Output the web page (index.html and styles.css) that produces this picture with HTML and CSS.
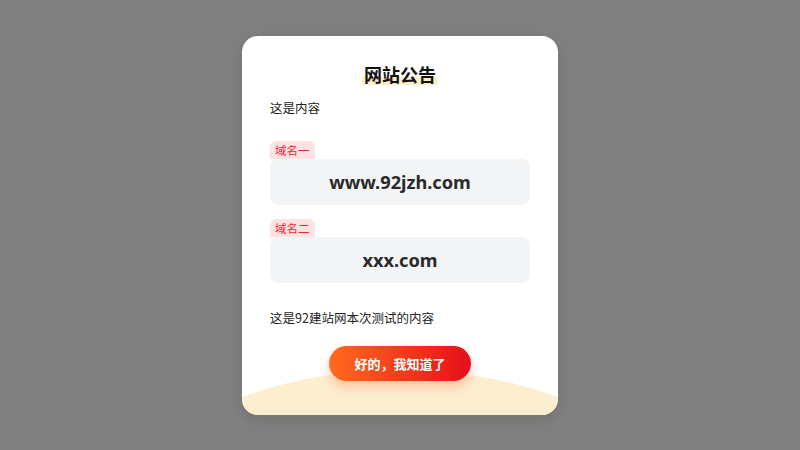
FILE: index.html
```html
<!DOCTYPE html>
<html lang="zh">
<head>
<meta charset="utf-8">
<link rel="stylesheet" href="styles.css">
</head>
<body>
<div class="overlay">
  <div class="card">
    <div class="arc"></div>
    <div class="content">
      <h1 class="title"><span>网站公告</span></h1>
      <p class="intro">这是内容</p>
      <div class="domain">
        <span class="tag">域名一</span>
        <div class="box">www.92jzh.com</div>
      </div>
      <div class="domain second">
        <span class="tag">域名二</span>
        <div class="box">xxx.com</div>
      </div>
      <p class="note">这是92建站网本次测试的内容</p>
      <div class="actions"><button class="btn">好的，我知道了</button></div>
    </div>
  </div>
</div>
</body>
</html>
```

FILE: styles.css
```css
html, body {
  margin: 0;
  padding: 0;
  height: 100%;
}
body {
  background: #808080;
  font-family: "Noto Sans CJK SC", "Noto Sans", sans-serif;
  color: #333;
}
.overlay {
  height: 450px;
  display: flex;
  align-items: center;
  justify-content: center;
}
.card {
  position: relative;
  width: 316px;
  height: 379px;
  box-sizing: border-box;
  background: #fff;
  border-radius: 16px;
  overflow: hidden;
  box-shadow: 0 4px 16px rgba(0,0,0,0.12);
}
.arc {
  position: absolute;
  left: -142px;
  top: 334px;
  width: 600px;
  height: 360px;
  border-radius: 50%;
  background: #fbefd0;
}
.content {
  position: relative;
  padding: 24px 28px 0 28px;
}
.title {
  margin: 0;
  text-align: center;
  font-size: 18px;
  line-height: 28px;
  font-weight: 700;
  color: #111;
}
.title span {
  padding: 0 2px;
  background: linear-gradient(to bottom, transparent 60%, #fdeec6 60%, #fdeec6 92%, transparent 92%);
}
.intro, .note {
  margin: 0;
  font-size: 12.5px;
  line-height: 20px;
  color: #222;
}
.intro {
  margin-top: 10px;
}
.domain {
  margin-top: 23px;
  display: flex;
  flex-direction: column;
  align-items: flex-start;
}
.domain.second {
  margin-top: 14px;
}
.tag {
  display: block;
  height: 18px;
  line-height: 18px;
  padding: 0 5px;
  font-size: 11.5px;
  color: #f0242f;
  background: #ffe1e1;
  border-radius: 6px 6px 0 0;
}
.box {
  align-self: stretch;
  height: 46px;
  line-height: 46px;
  background: #f3f4f6;
  border-radius: 8px;
  text-align: center;
  font-family: "Noto Sans", "Open Sans", sans-serif;
  font-weight: 700;
  font-size: 18.2px;
  color: #2a2a2a;
}
.note {
  margin-top: 25px;
}
.actions {
  margin-top: 18px;
  display: flex;
  justify-content: center;
}
.btn {
  width: 142px;
  height: 35px;
  border: none;
  border-radius: 18px;
  background: linear-gradient(to right, #ff6b1e, #e60f1a);
  color: #fff;
  font-family: "Noto Sans CJK SC", sans-serif;
  font-size: 13px;
  font-weight: 700;
  box-shadow: 0 6px 12px rgba(255, 90, 40, 0.3);
  padding: 0;
}
```
